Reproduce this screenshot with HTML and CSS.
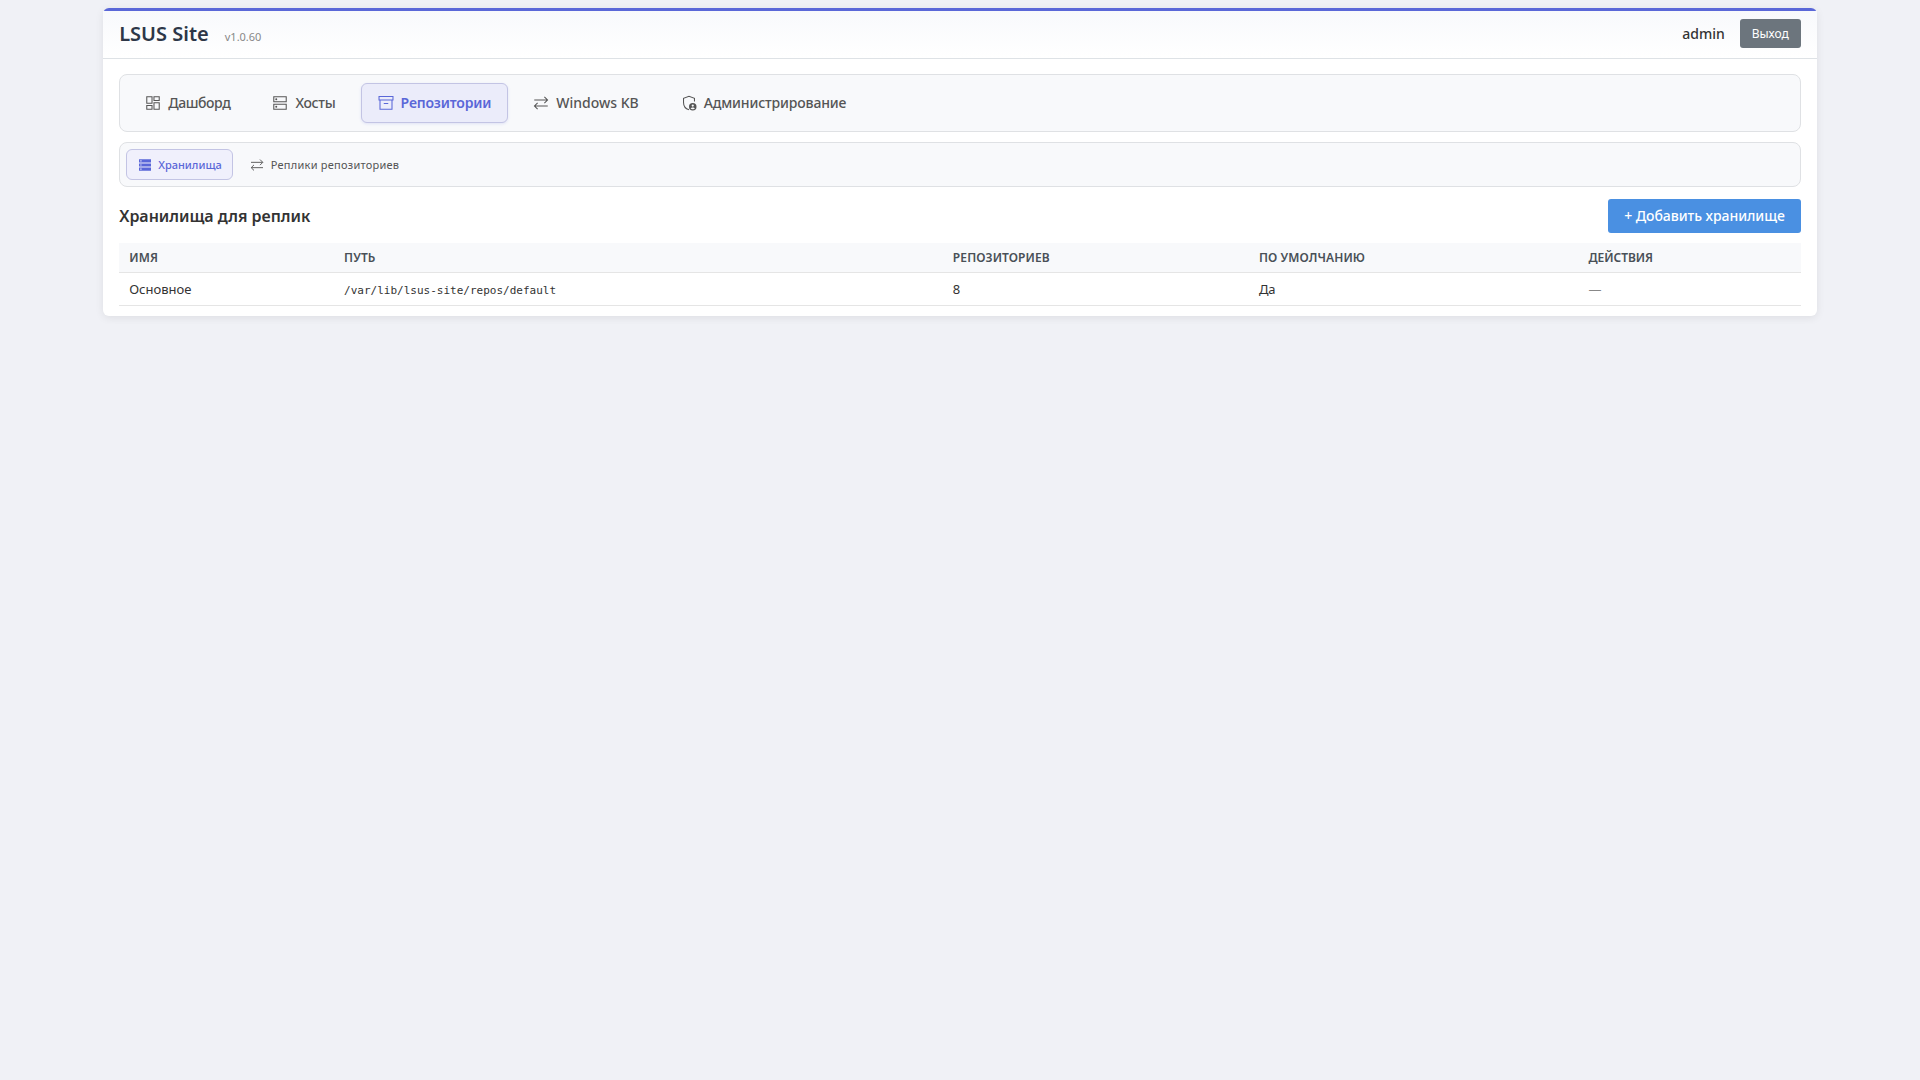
FILE: index.html
```html
<!DOCTYPE html>
<html lang="ru">
<head>
  <meta charset="UTF-8">
  <title>LSUS Site</title>
  <link rel="stylesheet" href="styles.css">
</head>
<body>
  <div class="container">
    <header class="header">
      <div class="brand">
        <h1>LSUS Site</h1>
        <span class="version">v1.0.60</span>
      </div>
      <div class="user-info">
        <span class="user-name">admin</span>
        <button class="btn-logout">Выход</button>
      </div>
    </header>

    <main class="content">
      <nav class="tabs">
        <button class="tab tab-dashboard">
          <svg class="icon" viewBox="0 0 24 24"><path d="M3.700 3.700h7v8.600h-7zM13.300 3.700h7v5h-7zM13.300 11.700h7v8.600h-7zM3.700 15.300h7v5h-7z"/></svg>
          <span>Дашборд</span>
        </button>
        <button class="tab tab-hosts">
          <svg class="icon" viewBox="0 0 24 24"><path d="M3.700 3.700h16.600v6.600H3.700zM3.700 13.700h16.600v6.600H3.700z"/><circle class="solid" cx="7" cy="7" r="1.300"/><circle class="solid" cx="7" cy="17" r="1.300"/></svg>
          <span>Хосты</span>
        </button>
        <button class="tab tab-repos active">
          <svg class="icon" viewBox="0 0 24 24"><path d="M2.700 3.400h18.600v4.600H2.700zM4 8v12.300h16V8M9 12.700h6"/></svg>
          <span>Репозитории</span>
        </button>
        <button class="tab">
          <svg class="icon" viewBox="0 0 24 24"><path d="M3 8h17.500M16.500 3.800 20.700 8l-4.200 4.200M21 16H3.500M7.500 11.800 3.300 16l4.200 4.200"/></svg>
          <span>Windows KB</span>
        </button>
        <button class="tab tab-admin">
          <svg class="icon" viewBox="0 0 24 24"><path d="M19.300 10V5.700L12 3 4.700 5.700v5.500c0 4.600 3 8.500 7.300 9.800"/><path class="solid" fill-rule="evenodd" d="M17 12a5 5 0 1 0 0 10 5 5 0 0 0 0-10zm0 1.900a1.500 1.500 0 1 1 0 3 1.500 1.500 0 0 1 0-3zm0 6.500c-1.200 0-2.200-.6-2.800-1.500.5-.7 1.700-1 2.800-1s2.300.3 2.800 1c-.6.900-1.600 1.500-2.800 1.500z"/></svg>
          <span>Администрирование</span>
        </button>
      </nav>

      <nav class="subtabs">
        <button class="subtab active">
          <svg class="icon" viewBox="0 0 24 24"><path class="solid" fill-rule="evenodd" d="M3 3.500h18v4.700H3zM5 5v1.800h1.800V5zM3 9.700h18v4.600H3zM5 11.100v1.800h1.800v-1.800zM3 15.800h18v4.700H3zM5 17.200V19h1.800v-1.800z"/></svg>
          <span>Хранилища</span>
        </button>
        <button class="subtab subtab-replicas">
          <svg class="icon" viewBox="0 0 24 24"><path d="M3 8h17.500M16.500 3.800 20.700 8l-4.200 4.200M21 16H3.500M7.500 11.800 3.300 16l4.200 4.200"/></svg>
          <span>Реплики репозиториев</span>
        </button>
      </nav>

      <div class="section-header">
        <h2>Хранилища для реплик</h2>
        <button class="btn-primary">+ Добавить хранилище</button>
      </div>

      <table class="table">
        <colgroup>
          <col class="col-name">
          <col class="col-path">
          <col class="col-count">
          <col class="col-default">
          <col>
        </colgroup>
        <thead>
          <tr>
            <th>Имя</th>
            <th>Путь</th>
            <th>Репозиториев</th>
            <th>По умолчанию</th>
            <th class="th-actions">Действия</th>
          </tr>
        </thead>
        <tbody>
          <tr>
            <td>Основное</td>
            <td><code>/var/lib/lsus-site/repos/default</code></td>
            <td>8</td>
            <td>Да</td>
            <td><span class="muted">—</span></td>
          </tr>
        </tbody>
      </table>
    </main>
  </div>
</body>
</html>
```
FILE: styles.css
```css
* {
    box-sizing: border-box;
    margin: 0;
    padding: 0;
}

body {
    font-family: "Noto Sans", sans-serif;
    background: #f0f1f6;
    color: #333;
    padding: 8px;
    font-size: 14px;
}

button {
    font-family: inherit;
    cursor: pointer;
}

.container {
    width: 90%;
    margin: 0 auto;
    background: #fff;
    border-top: 3px solid #5a67d8;
    border-radius: 6px;
    box-shadow: 0 2px 8px rgba(0, 0, 0, 0.08);
}

.header {
    display: flex;
    justify-content: space-between;
    align-items: center;
    height: 48px;
    padding: 0 16px 2px;
    border-bottom: 1px solid #dee2e6;
    background: linear-gradient(180deg, #f8f9fc 0%, #fff 100%);
}

.brand {
    display: flex;
    align-items: baseline;
    gap: 16px;
}

.brand h1 {
    font-size: 20px;
    font-weight: 600;
    color: #2d3748;
}

.version {
    font-size: 11px;
    color: #888;
}

.user-info {
    display: flex;
    align-items: center;
    gap: 15px;
}

.user-name {
    font-weight: 500;
}

.btn-logout {
    height: 29px;
    padding: 0 12px;
    font-size: 12px;
    color: #fff;
    background: #6c757d;
    border: none;
    border-radius: 3px;
}

.content {
    padding: 15px 16px 10px;
}

.tabs,
.subtabs {
    display: flex;
    background: #f8f9fb;
    border: 1px solid #dfe1e4;
    border-radius: 8px;
}

.tabs {
    gap: 8px;
    padding: 8px;
    margin-bottom: 10px;
}

.subtabs {
    gap: 6px;
    padding: 6px;
    margin-bottom: 12px;
}

.tab,
.subtab {
    display: flex;
    align-items: center;
    background: transparent;
    border: 1px solid transparent;
    border-radius: 6px;
    color: #555;
    font-weight: 500;
}

.tab {
    height: 40px;
    padding: 0 16px 1px 15px;
    gap: 6px;
    font-size: 14px;
}

.tab-dashboard {
    letter-spacing: -0.42px;
}

.tab-hosts {
    letter-spacing: -0.25px;
}

.tab-repos,
.tab-admin {
    letter-spacing: -0.16px;
}

.subtab {
    height: 31px;
    padding: 0 10px 0 10px;
    gap: 5px;
    font-size: 11px;
}

.subtab-replicas {
    padding-left: 9px;
    gap: 6px;
    font-weight: 400;
    letter-spacing: 0.25px;
}

.tab.active,
.subtab.active {
    color: #5a67d8;
    border-color: #c3c4e4;
}

.tab.active {
    font-weight: 600;
    background: #ebecfa;
    box-shadow: 0 1px 3px rgba(90, 103, 216, 0.15);
}

.subtab.active {
    background: #f0f0fc;
}

.icon {
    width: 18px;
    height: 18px;
    fill: none;
    stroke: currentColor;
    stroke-width: 1.4;
}

.subtab .icon {
    width: 16px;
    height: 16px;
}

.icon .solid {
    fill: currentColor;
    stroke: none;
}

.section-header {
    display: flex;
    justify-content: space-between;
    align-items: center;
    margin-bottom: 10px;
}

.section-header h2 {
    font-size: 16px;
    font-weight: 600;
    letter-spacing: -0.02px;
}

.btn-primary {
    height: 34px;
    padding: 0 16px 1px;
    font-size: 14px;
    font-weight: 500;
    letter-spacing: -0.05px;
    color: #fff;
    background: #4a90e2;
    border: none;
    border-radius: 3px;
}

.table {
    width: 100%;
    table-layout: fixed;
    border-collapse: separate;
    border-spacing: 0;
}

.col-name {
    width: 12.78%;
}

.col-path {
    width: 36.2%;
}

.col-count {
    width: 18.2%;
}

.col-default {
    width: 19.6%;
}

.table th,
.table td {
    text-align: left;
    padding: 0 10px;
    border-bottom: 1px solid #e5e5e5;
}

.table th {
    height: 30px;
    font-size: 12px;
    font-weight: 600;
    letter-spacing: 0.1px;
    text-transform: uppercase;
    color: #495057;
    background: #f8f9fb;
}

.table .th-actions {
    letter-spacing: -0.05px;
}

.table td {
    height: 33px;
    font-size: 13px;
}

.table code {
    font-family: "DejaVu Sans Mono", monospace;
    font-size: 11px;
}

.muted {
    color: #888;
}
```
